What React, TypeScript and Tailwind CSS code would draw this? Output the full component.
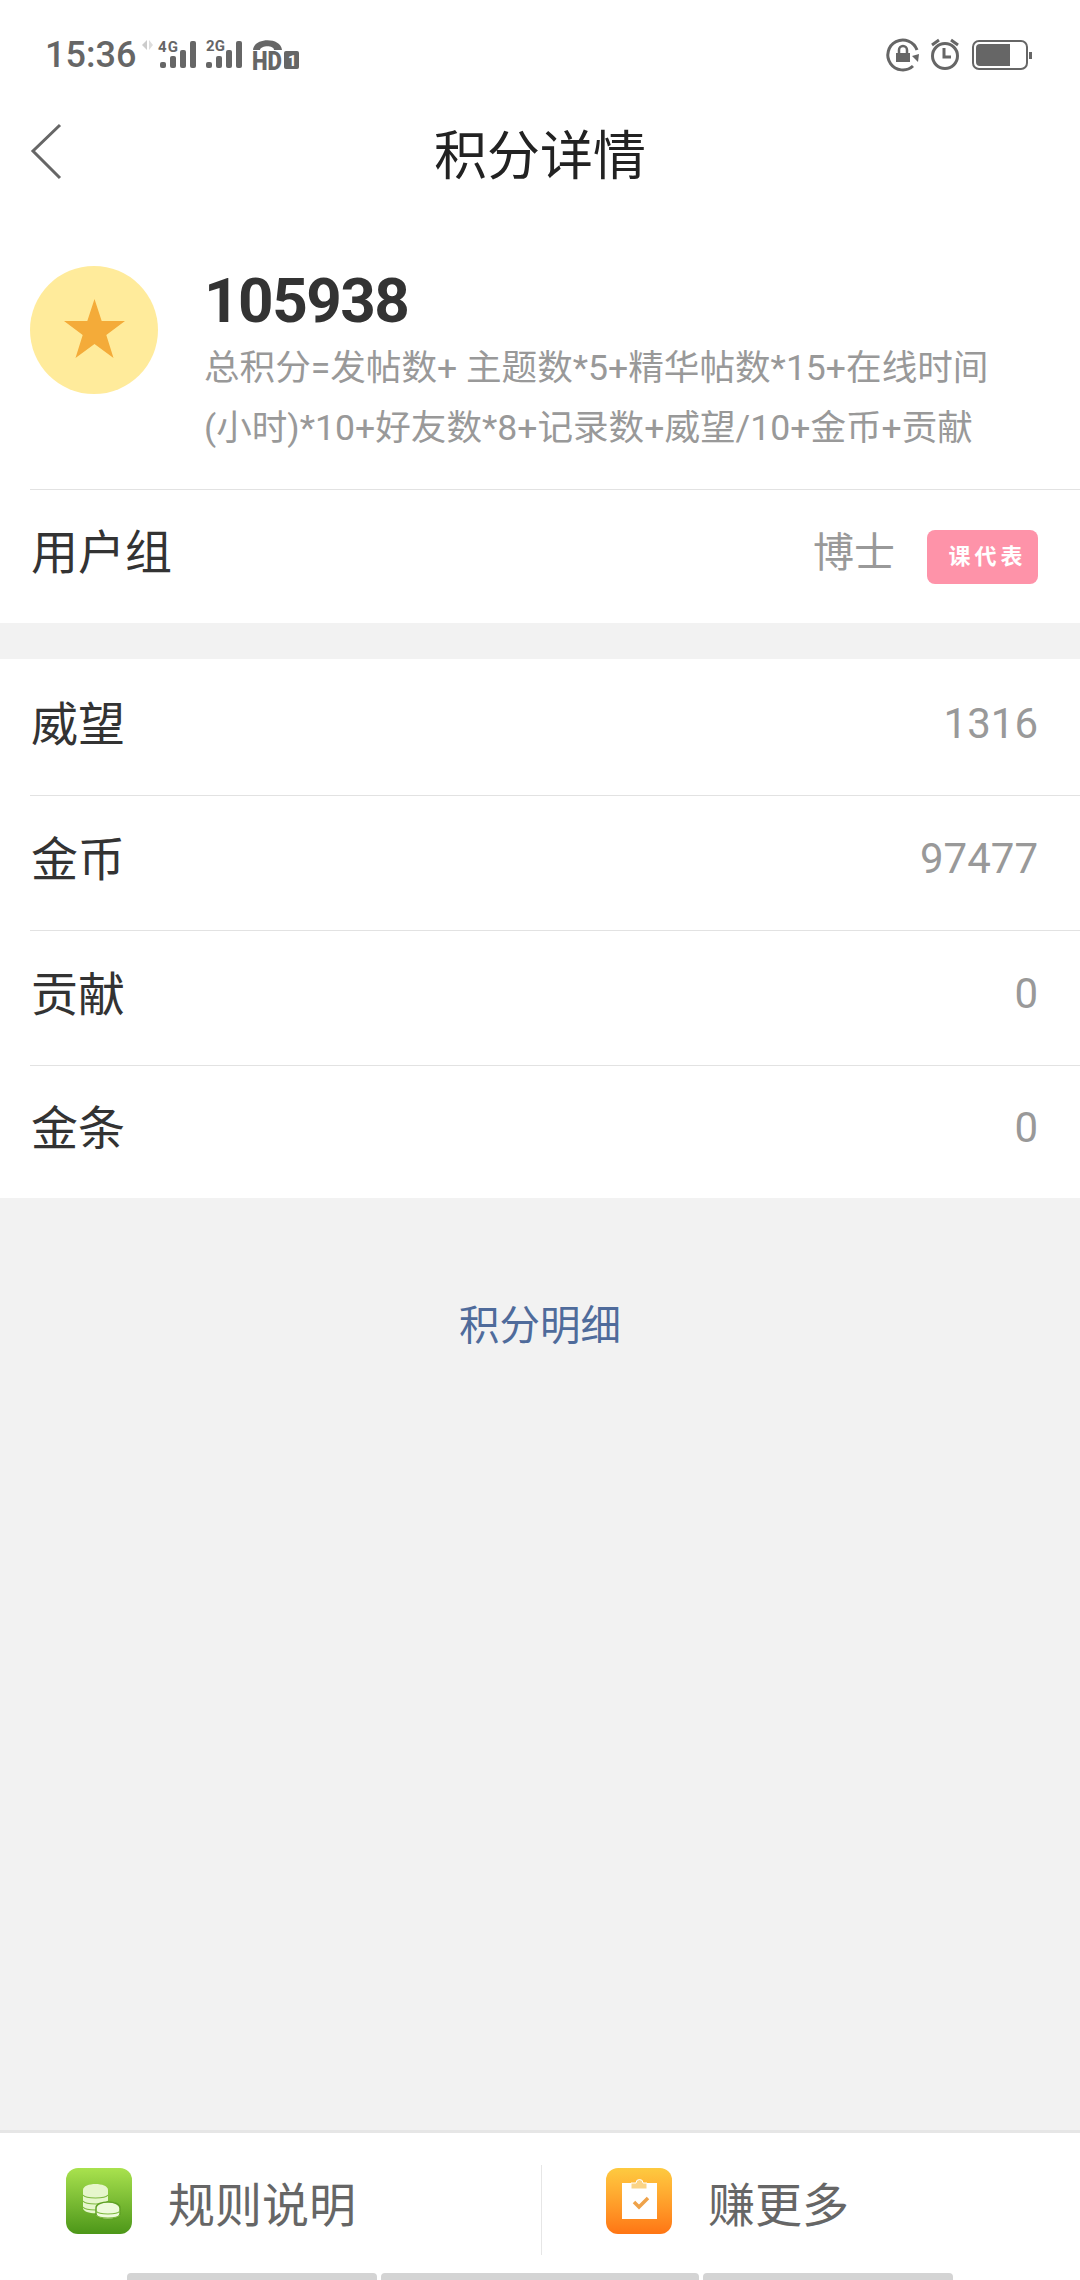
import { Fragment } from 'react';

const FONT = 'font-[Roboto,"Noto_Sans_CJK_SC",sans-serif]';

const rows = [
  { label: '威望', value: '1316' },
  { label: '金币', value: '97477' },
  { label: '贡献', value: '0' },
  { label: '金条', value: '0' },
];

function SignalBars({ x }: { x: number }) {
  return (
    <g fill="#666">
      <rect x={x} y="62" width="6" height="6" rx="2" />
      <rect x={x + 10} y="56" width="6" height="12" rx="2" />
      <rect x={x + 20} y="50" width="6" height="18" rx="2" />
      <rect x={x + 30} y="41" width="6" height="27" rx="2" />
    </g>
  );
}

function StatusLeftIcons() {
  return (
    <svg width="165" height="40" viewBox="140 35 165 40">
      <path d="M147 40v10l-5-5z" fill="#ccc" />
      <path d="M149 40v10l4-5z" fill="#ddd" />
      <text x="158" y="52" fontSize="15" fontWeight="700" fill="#666" fontFamily="Roboto, sans-serif" textLength="20">4G</text>
      <SignalBars x={160} />
      <text x="206" y="51" fontSize="15" fontWeight="700" fill="#666" fontFamily="Roboto, sans-serif" textLength="19">2G</text>
      <SignalBars x={206} />
      <path d="M253 50c1-13 28-13 29 0h-8c0-5-13-5-14 0z" fill="#666" />
      <text x="252" y="70" fontSize="25" fontWeight="900" fill="#666" fontFamily="Roboto, sans-serif" textLength="30" lengthAdjust="spacingAndGlyphs">HD</text>
      <rect x="284" y="51" width="15" height="18" rx="2" fill="#666" />
      <text x="288" y="66" fontSize="15" fontWeight="700" fill="#fff" fontFamily="Roboto, sans-serif">1</text>
    </svg>
  );
}

function StatusRightIcons() {
  return (
    <svg width="150" height="40" viewBox="885 35 150 40">
      {/* 锁屏旋转 */}
      <path d="M917 50A15 15 0 1 0 913 66" fill="none" stroke="#666" strokeWidth="3" />
      <path d="M912 56l7-2-1 8z" fill="#666" />
      <rect x="896" y="53" width="14" height="9" fill="#666" />
      <path d="M899 53v-3a4 4 0 0 1 8 0v3" fill="none" stroke="#666" strokeWidth="2.500" />
      {/* 闹钟 */}
      <circle cx="945" cy="56" r="12.500" fill="none" stroke="#666" strokeWidth="3" />
      <path d="M944 48v9h7" fill="none" stroke="#666" strokeWidth="3" />
      <path d="M932 45l7-5M958 45l-7-5" stroke="#666" strokeWidth="3" />
      {/* 电池 */}
      <rect x="973" y="41" width="54" height="28" rx="6" fill="none" stroke="#666" strokeWidth="2" />
      <path d="M976 48a4 4 0 0 1 4-4h30v22h-30a4 4 0 0 1-4-4z" fill="#666" />
      <rect x="1029" y="52" width="3" height="7" fill="#666" />
    </svg>
  );
}

function CoinsIcon() {
  return (
    <svg width="66" height="66" viewBox="0 0 66 66" className="rounded-[12px] bg-gradient-to-b from-[#a9e24e] to-[#4c9718]">
      <path d="M17 22c0-8 25-8 25 0v18c0 7-25 7-25 0z" fill="#e6f6cc" />
      <path d="M17 27c3 4 22 4 25 0M17 33c3 4 22 4 25 0M17 39c3 4 22 4 25 0" fill="none" stroke="#7db83f" strokeWidth="1.200" />
      <path d="M30 40c0-8 24-8 24 0v6c0 7-24 7-24 0z" fill="#eefadb" stroke="#5fa024" strokeWidth="1.500" />
      <path d="M30 43c3 4 21 4 24 0M30 47c3 4 21 4 24 0" fill="none" stroke="#7db83f" strokeWidth="1.200" />
    </svg>
  );
}

function TaskIcon() {
  return (
    <svg width="66" height="66" viewBox="0 0 66 66" className="rounded-[12px] bg-gradient-to-b from-[#fdca40] to-[#ff7513]">
      <rect x="16" y="15" width="35" height="36" fill="#fff" />
      <path d="M25 21v-6h5a3.500 3.500 0 0 1 7 0h4v6z" fill="#fbd487" stroke="#fff" strokeWidth="1" />
      <path d="M28 34l5 5 9-9" fill="none" stroke="#eea24a" strokeWidth="3.500" />
    </svg>
  );
}

export default function App() {
  return (
    <div className={`${FONT} flex h-[2280px] w-[1080px] flex-col overflow-hidden bg-[#f2f2f2]`}>
      {/* 状态栏 */}
      <div className="flex h-[110px] items-center justify-between bg-white pl-[45px] pr-[45px]">
        <div className="flex items-center">
          <span className="w-[95px] text-[36px] font-medium leading-[40px] text-[#666]">15:36</span>
          <StatusLeftIcons />
        </div>
        <StatusRightIcons />
      </div>

      {/* 标题栏 */}
      <div className="relative flex h-[88px] items-center justify-center bg-white pt-[6px]">
        <svg className="absolute left-[30px] top-[13px]" width="32" height="58" viewBox="0 0 32 58">
          <path d="M30 2L3 28l27 27" fill="none" stroke="#666" strokeWidth="3" />
        </svg>
        <span className="text-[53px] leading-[60px] text-[#222]">积分详情</span>
      </div>

      {/* 总积分 */}
      <div className="bg-white pl-[30px]">
        <div className="flex h-[292px] items-start border-b border-[#e2e2e2]">
          <div className="mt-[68px] flex h-[128px] w-[128px] shrink-0 items-center justify-center rounded-full bg-[#ffeb9b]">
            <svg className="mb-[4px]" width="61" height="59" viewBox="0 0 61 59">
              <path d="M30.500 0l7.200 22H61L42.300 36l7.200 23-19-14-19 14 7.200-23L0 22h23.300z" fill="#f4ab39" />
            </svg>
          </div>
          <div className="ml-[46px] min-w-0 pt-[65px]">
            <div className="text-[62px] font-bold leading-[75px] tracking-[-1.500px] text-[#333]">105938</div>
            <div className="text-[35.600px] leading-[60px] text-[#999]">
              <div className="whitespace-nowrap">总积分=发帖数+ 主题数*5+精华帖数*15+在线时间</div>
              <div className="whitespace-nowrap">(小时)*10+好友数*8+记录数+威望/10+金币+贡献</div>
            </div>
          </div>
        </div>
      </div>

      {/* 用户组 */}
      <div className="flex h-[133px] items-center justify-between bg-white pl-[31px] pr-[42px]">
        <span className="pb-[6px] text-[47px] text-[#333]">用户组</span>
        <div className="flex items-center">
          <span className="pb-[6px] text-[41px] text-[#999]">博士</span>
          <span className="ml-[32px] flex h-[54px] w-[111px] items-center justify-center rounded-[8px] bg-[#fe93a9] pl-[10px] text-[22px] font-bold tracking-[4px] text-white">
            课代表
          </span>
        </div>
      </div>

      {/* 数值列表 */}
      <div className="mt-[36px] bg-white pl-[30px] pt-[2px]">
        {rows.map((row, i) => (
          <Fragment key={row.label}>
            {i > 0 && <div className="h-px bg-[#e2e2e2]" />}
            <div className="flex h-[134px] items-center justify-between pl-px pr-[42px] last:h-[132px]">
              <span className="pb-[6px] text-[47px] text-[#333]">{row.label}</span>
              <span className="pb-[10px] text-[42px] text-[#999]">{row.value}</span>
            </div>
          </Fragment>
        ))}
      </div>

      {/* 积分明细 */}
      <div className="flex-1 pt-[99px] text-center text-[40.500px] leading-[58px] text-[#4f6b9b]">积分明细</div>

      {/* 底部按钮 */}
      <div className="border-t-[3px] border-[#e6e6e6] bg-white">
        <div className="flex h-[140px] items-center pb-[4px]">
          <div className="flex w-[541px] items-center gap-[36px] pl-[66px]">
            <CoinsIcon />
            <span className="pt-[10px] text-[47px] text-[#666]">规则说明</span>
          </div>
          <div className="mt-[18px] h-[90px] w-px bg-[#e6e6e6]" />
          <div className="flex flex-1 items-center gap-[36px] pl-[64px]">
            <TaskIcon />
            <span className="pt-[10px] text-[47px] text-[#666]">赚更多</span>
          </div>
        </div>
        <div className="flex h-[7px] gap-[4px] pl-[127px]">
          <div className="w-[250px] rounded-t-[4px] bg-[#d4d4d4]" />
          <div className="w-[318px] rounded-t-[4px] bg-[#d4d4d4]" />
          <div className="w-[250px] rounded-t-[4px] bg-[#d4d4d4]" />
        </div>
      </div>
    </div>
  );
}
